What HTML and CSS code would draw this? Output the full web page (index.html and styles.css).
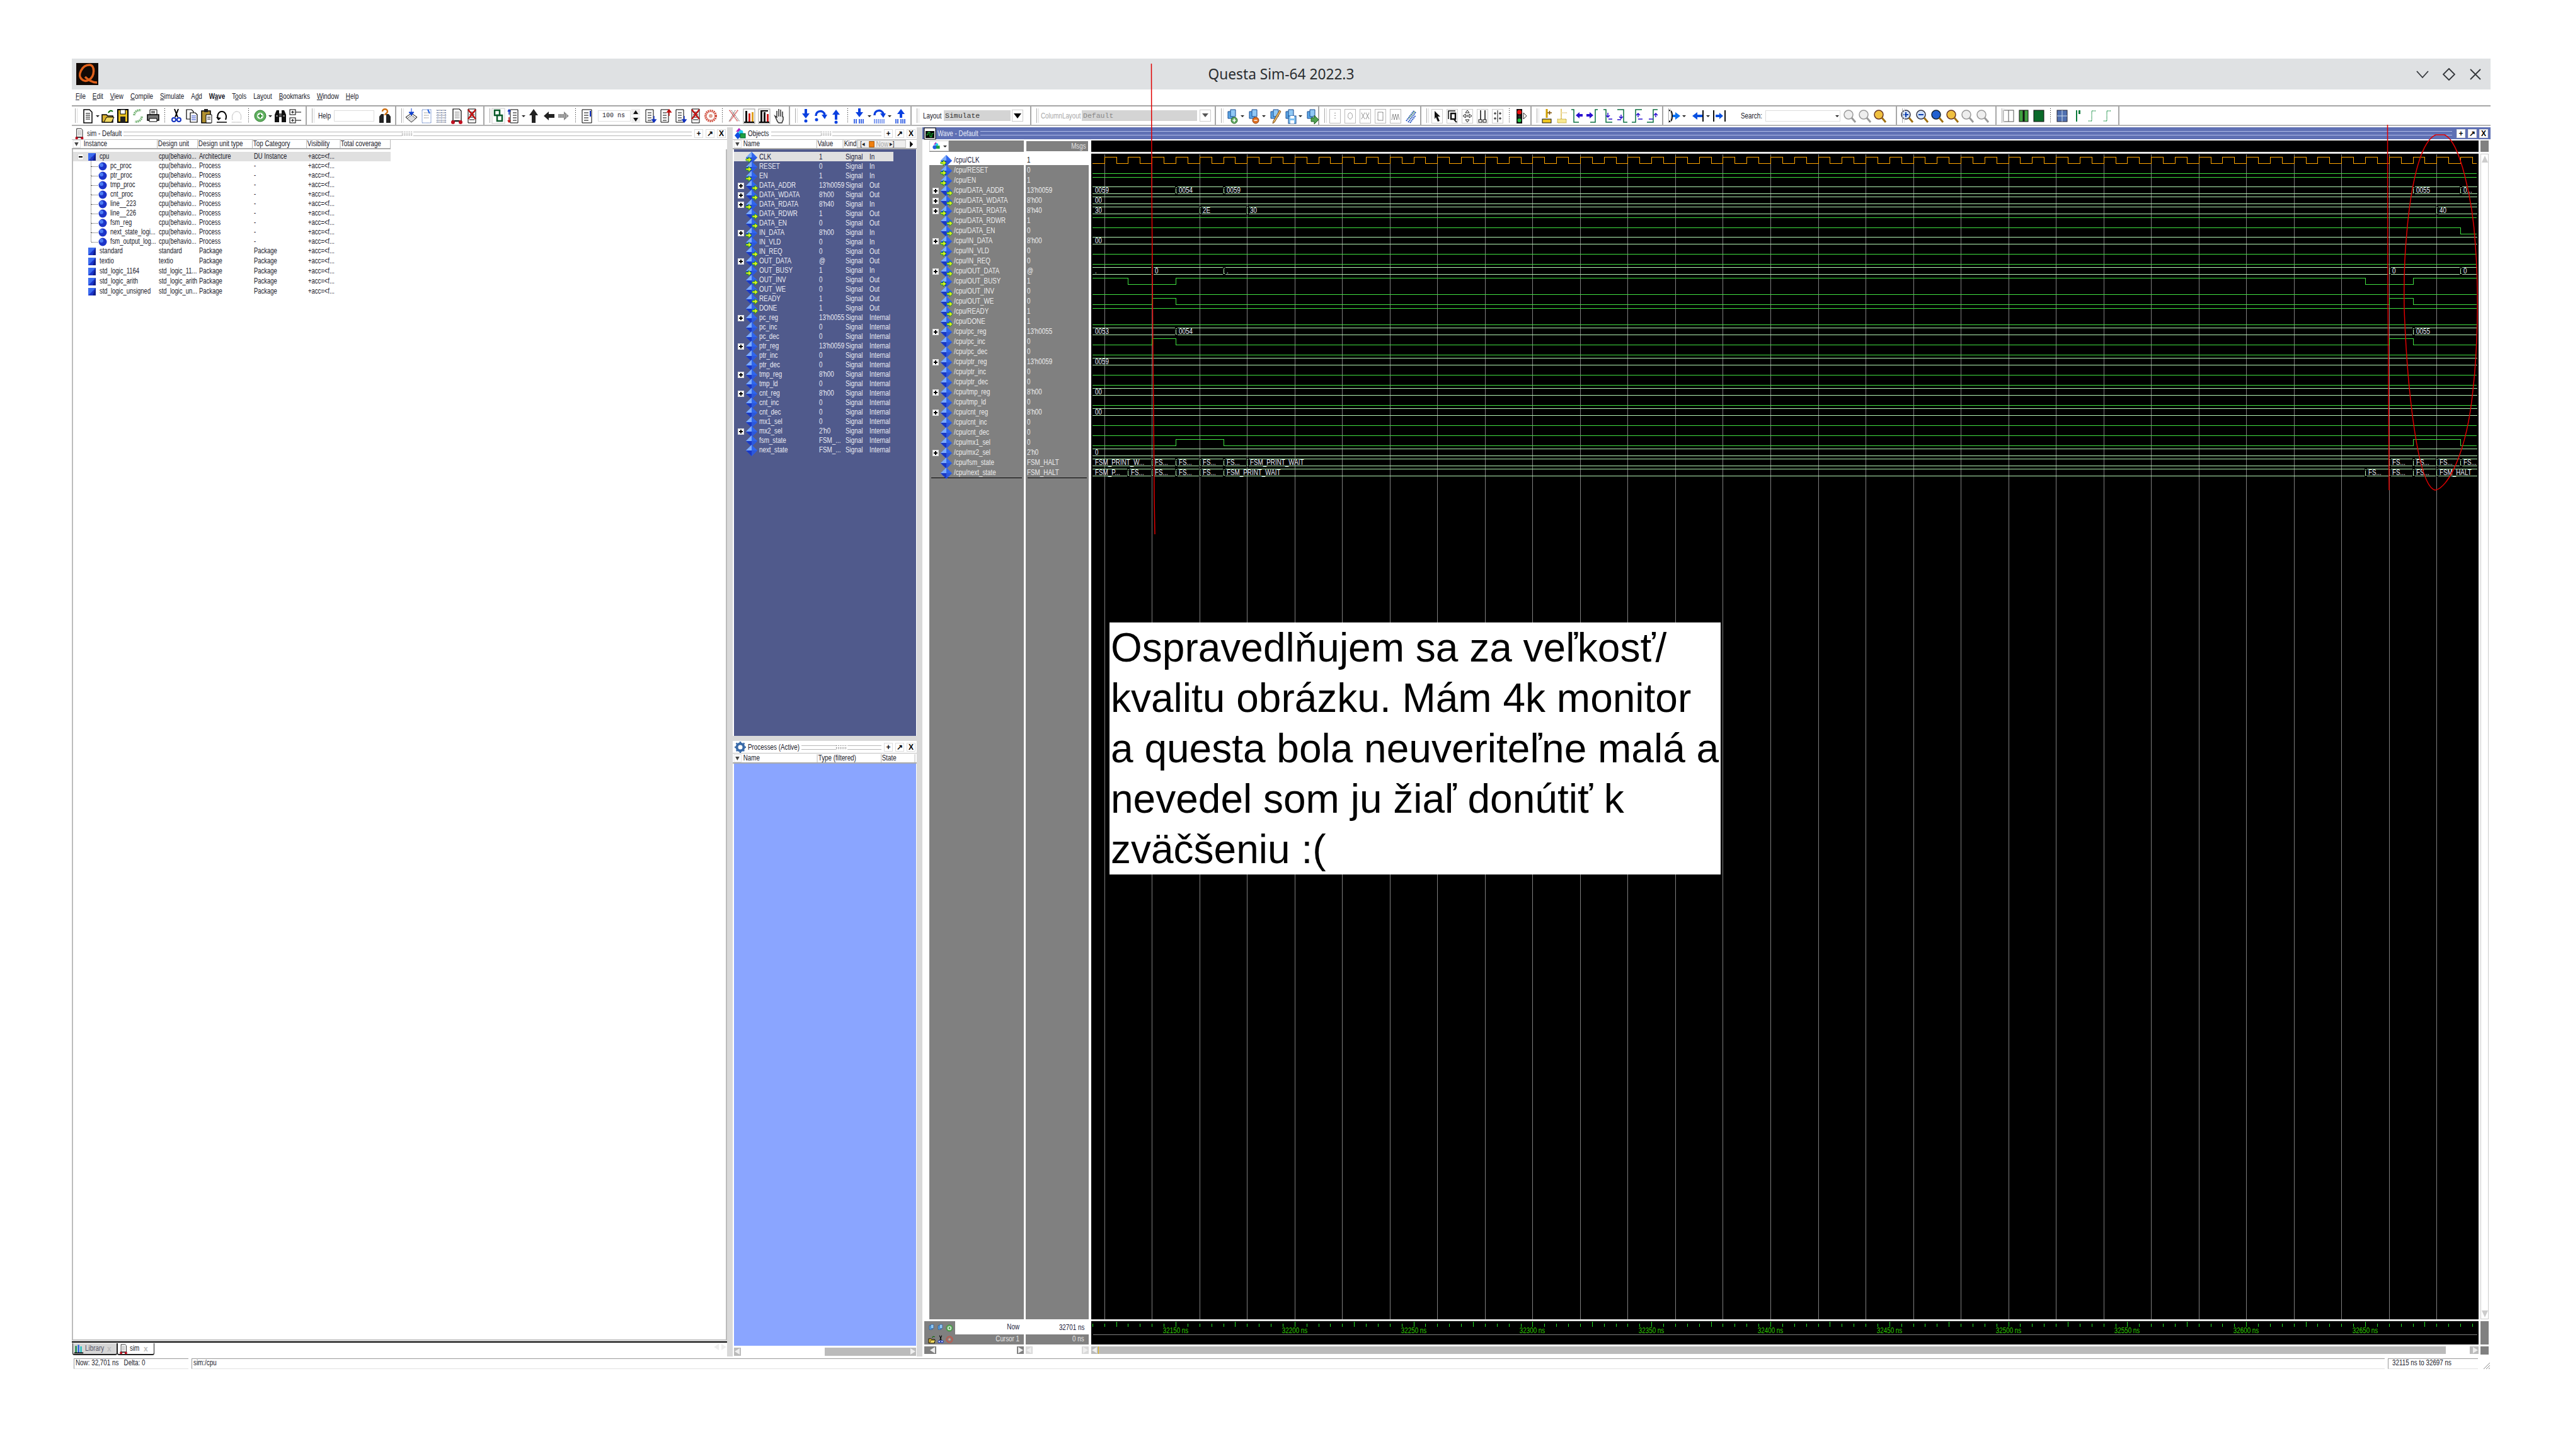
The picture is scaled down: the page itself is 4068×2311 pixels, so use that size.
FILE: index.html
```html
<!DOCTYPE html>
<html lang="en">
<head>
<meta charset="utf-8">
<title>Questa Sim-64 2022.3</title>
<link rel="stylesheet" href="styles.css">
</head>
<body>
<svg class="sprite" xmlns="http://www.w3.org/2000/svg">
<defs>
<symbol id="dia" viewBox="0 0 24 18"><path d="M12 0l9 9-9 9-9-9z" fill="#2f66ee"/><path d="M12 0v9H3z" fill="#7cabfa"/><path d="M3 9h9v9z" fill="#1a38c4"/><path d="M12 9h9l-9 9z" fill="#2c58dc"/></symbol>
<symbol id="sin" viewBox="0 0 24 18"><use href="#dia" width="24" height="18"/><path d="M4 11h4V8l5 4.500-5 4.500v-3H4z" fill="#d8f020" stroke="#0a8a20" stroke-width=".8" transform="translate(-1 0)"/></symbol>
<symbol id="sou" viewBox="0 0 24 18"><use href="#dia" width="24" height="18"/><path d="M13 11h4V8l5 4.500-5 4.500v-3h-4z" fill="#d8f020" stroke="#0a8a20" stroke-width=".8"/></symbol>
<symbol id="mod" viewBox="0 0 14 14"><rect x="1" y="1" width="12" height="12" fill="#1c34c8"/><path d="M1 1h12L1 13z" fill="#3c6cf0"/><path d="M13 1v12H8z" fill="#12208c"/></symbol>
<symbol id="prc" viewBox="0 0 14 14"><circle cx="7" cy="7" r="6.500" fill="#1c34c8"/><circle cx="5" cy="5" r="3" fill="#4c7cf4"/></symbol>
<symbol id="doc" viewBox="0 0 24 28"><path d="M6 4h9l4 4v17H6z" fill="#fff" stroke="#000" stroke-width="1.500"/><path d="M9 10h7M9 13h7M9 16h7M9 19h7" stroke="#000"/></symbol>
<symbol id="open" viewBox="0 0 24 28"><path d="M3 24V12h7l2 2h8v10z" fill="#d8b030" stroke="#000" stroke-width="1.500"/><path d="M6 24l4-8h12l-4 8z" fill="#f0d860" stroke="#000"/><path d="M13 9c2-4 5-4 7-2" fill="none" stroke="#060" stroke-width="2"/></symbol>
<symbol id="save" viewBox="0 0 24 28"><rect x="4" y="4" width="16" height="20" fill="#e8c020" stroke="#000" stroke-width="2"/><rect x="8" y="4" width="8" height="7" fill="#fff" stroke="#000"/><rect x="8" y="15" width="8" height="9" fill="#222"/></symbol>
<symbol id="reload" viewBox="0 0 24 28"><path d="M6 13c0-5 5-9 11-8M18 15c0 5-5 9-11 8" fill="none" stroke="#70b070" stroke-width="3.500" stroke-dasharray="2 1"/></symbol>
<symbol id="print" viewBox="0 0 24 28"><path d="M7 4h11v8H7z" fill="#fff" stroke="#000"/><path d="M3 12h18v9H3z" fill="#777" stroke="#000" stroke-width="1.500"/><path d="M6 18h12v5H6z" fill="#fff" stroke="#000"/><path d="M9 7h6M9 9h6" stroke="#000"/></symbol>
<symbol id="cut" viewBox="0 0 24 28"><path d="M9 3l5 13M15 3l-5 13" stroke="#000" stroke-width="2"/><circle cx="8" cy="20" r="3" fill="#fff" stroke="#1030c0" stroke-width="2"/><circle cx="16" cy="20" r="3" fill="#fff" stroke="#1030c0" stroke-width="2"/></symbol>
<symbol id="copy" viewBox="0 0 24 28"><path d="M4 4h8l3 3v12H4z" fill="#fff" stroke="#000" stroke-width="1.200"/><path d="M10 9h8l3 3v12H10z" fill="#fff" stroke="#000" stroke-width="1.200"/><path d="M12 14h7M12 17h7M12 20h7" stroke="#1030c0"/></symbol>
<symbol id="paste" viewBox="0 0 24 28"><rect x="4" y="6" width="14" height="19" fill="#b09030" stroke="#000" stroke-width="1.500"/><rect x="8" y="3" width="6" height="5" fill="#222"/><path d="M11 12h9v13h-9z" fill="#fff" stroke="#000"/><path d="M13 16h5M13 19h5" stroke="#000"/></symbol>
<symbol id="undo" viewBox="0 0 24 28"><path d="M7 20c-4-6 0-13 5-13s9 6 6 13" fill="none" stroke="#000" stroke-width="2"/><path d="M3 16l4 5 4-4z" fill="#000"/><path d="M4 24h16" stroke="#000" stroke-width="1.500"/></symbol>
<symbol id="redo" viewBox="0 0 24 28"><path d="M5 20c-2-7 2-13 7-13s8 6 6 13" fill="none" stroke="#888" stroke-dasharray="1 1"/><path d="M4 24h16" stroke="#888" stroke-dasharray="1 1"/></symbol>
<symbol id="add" viewBox="0 0 24 28"><circle cx="12" cy="14" r="9" fill="#60b060" stroke="#2a7a2a"/><circle cx="12" cy="14" r="5" fill="#fff"/><path d="M12 10.500v7M8.500 14h7" stroke="#2a8a2a" stroke-width="2"/></symbol>
<symbol id="binoc" viewBox="0 0 24 28"><path d="M3 24V12l3-7h4v19zM21 24V12l-3-7h-4v19z" fill="#111"/><path d="M10 10h4v6h-4z" fill="#555"/><path d="M5 14h3M16 14h3" stroke="#fff"/></symbol>
<symbol id="cmp" viewBox="0 0 24 28"><rect x="3" y="4" width="9" height="8" fill="#fff" stroke="#000"/><rect x="3" y="17" width="9" height="8" fill="#fff" stroke="#000"/><path d="M12 8h9M12 21h9M5 8h5M5 21h5M7.500 6v4M7.500 19v4" stroke="#000"/></symbol>
<symbol id="qfind" viewBox="0 0 24 28"><path d="M3 25V15l3-4h4v14zM21 25V15l-3-4h-4v14z" fill="#222"/><path d="M8 7c0-5 8-5 8 0 0 3-4 3-4 6" fill="none" stroke="#d07010" stroke-width="2.500"/></symbol>
<symbol id="layers" viewBox="0 0 24 28"><path d="M12 10l9 6-9 8-9-8z" fill="#fff" stroke="#000"/><path d="M12 13l7 5-7 6-7-6z" fill="#ddd" stroke="#000" stroke-dasharray="1 1"/><path d="M12 2v8M8 8h8l-4 5z" fill="#1040d0" stroke="#1040d0"/></symbol>
<symbol id="dotdoc" viewBox="0 0 24 28"><path d="M5 4h14v21H5z" fill="#fff" stroke="#2050b0" stroke-dasharray="1 1"/><path d="M8 9h8M8 13h8M8 17h8" stroke="#555" stroke-dasharray="1 1"/><path d="M14 4l3 6" stroke="#2060e0" stroke-width="2"/></symbol>
<symbol id="dotgrid" viewBox="0 0 24 28"><path d="M4 5h16M4 9h16M4 13h16M4 17h16M4 21h16M4 24h16" stroke="#223" stroke-dasharray="1 1" stroke-width="1.200"/><path d="M6 5v19M12 5v19M18 5v19" stroke="#2050b0" stroke-dasharray="1 2"/></symbol>
<symbol id="simdoc" viewBox="0 0 24 28"><path d="M6 3h10l3 3v16H6z" fill="#fff" stroke="#000" stroke-width="1.200"/><path d="M9 8h7M9 11h7M9 14h7M9 17h7" stroke="#000" stroke-dasharray="1 1"/><path d="M4 22h16" stroke="#000" stroke-width="2"/><circle cx="6" cy="24" r="3" fill="#c01020"/><circle cx="18" cy="24" r="3" fill="#c01020"/></symbol>
<symbol id="xdoc" viewBox="0 0 24 28"><path d="M6 3h12v22H6z" fill="#fff" stroke="#000"/><path d="M8 8h8M8 12h8M8 16h8M8 20h8" stroke="#000"/><path d="M6 4l12 15M18 4L6 19" stroke="#c01010" stroke-width="2.500"/></symbol>
<symbol id="chip" viewBox="0 0 24 28"><rect x="2" y="2" width="20" height="24" fill="#fff" stroke="#ccc"/><rect x="6" y="5" width="8" height="8" fill="none" stroke="#0a5a2a" stroke-width="2.500"/><rect x="10" y="13" width="8" height="9" fill="none" stroke="#0a5a2a" stroke-width="2.500"/></symbol>
<symbol id="listarr" viewBox="0 0 24 28"><path d="M7 4h12v21H7z" fill="#fff" stroke="#000"/><path d="M11 9h6M11 13h6M11 17h6M11 21h6" stroke="#000"/><path d="M5 12V5M3 7l2-3 2 3" fill="none" stroke="#1030c0" stroke-width="1.500"/><path d="M5 16v8M3 21l2 3 2-3" fill="none" stroke="#c01010" stroke-width="1.500"/></symbol>
<symbol id="upbig" viewBox="0 0 24 28"><path d="M12 3l7 10h-4v12H9V13H5z" fill="#222"/></symbol>
<symbol id="leftbig" viewBox="0 0 24 28"><path d="M4 14l8-7v4h9v6h-9v4z" fill="#222"/></symbol>
<symbol id="rightg" viewBox="0 0 24 28"><path d="M20 14l-8-7v4H3v6h9v4z" fill="#888"/><path d="M4 12h14M4 14h16M4 16h14" stroke="#fff" stroke-dasharray="1 2"/></symbol>
<symbol id="docarr" viewBox="0 0 24 28"><path d="M4 4h15v21H4z" fill="#fff" stroke="#000"/><path d="M7 9h7M7 13h7M7 17h7M7 21h7" stroke="#000"/><path d="M17 6v9" stroke="#1030c0" stroke-width="2"/></symbol>
<symbol id="docdn" viewBox="0 0 24 28"><path d="M5 4h12v20H5z" fill="#fff" stroke="#000"/><path d="M8 9h6M8 13h6M8 17h6M8 21h6" stroke="#000"/><path d="M18 14v9M15 20l3 4 3-4z" stroke="#1030c0" fill="#1030c0" stroke-width="1.500"/></symbol>
<symbol id="docup" viewBox="0 0 24 28"><path d="M5 4h12v20H5z" fill="#fff" stroke="#000"/><path d="M8 9h6M8 13h6M8 17h6M8 21h6" stroke="#000"/><path d="M18 14V5M15 8l3-4 3 4z" stroke="#c01010" fill="#c01010" stroke-width="1.500"/></symbol>
<symbol id="redc" viewBox="0 0 24 28"><circle cx="12" cy="14" r="8" fill="none" stroke="#d05040" stroke-width="4" stroke-dasharray="2 1"/><circle cx="12" cy="14" r="3" fill="#e0a090"/></symbol>
<symbol id="dotx" viewBox="0 0 24 28"><path d="M5 5l13 18M18 5L5 23" stroke="#c02020" stroke-width="2" stroke-dasharray="1 1"/><path d="M8 5l13 18M14 5L4 23" stroke="#222" stroke-dasharray="1 1"/></symbol>
<symbol id="chartp" viewBox="0 0 24 28"><rect x="3" y="3" width="18" height="23" fill="#fff" stroke="#999"/><path d="M4 24h16" stroke="#000" stroke-width="2"/><rect x="6" y="6" width="3" height="17" fill="#111"/><rect x="11" y="10" width="3" height="13" fill="#d02020"/><rect x="16" y="8" width="3" height="15" fill="#e0a020"/></symbol>
<symbol id="chartm" viewBox="0 0 24 28"><rect x="3" y="3" width="18" height="23" fill="#fff" stroke="#999"/><path d="M4 24h16M6 6h12" stroke="#000" stroke-width="2"/><rect x="6" y="6" width="3" height="17" fill="#111"/><rect x="11" y="8" width="3" height="15" fill="#111"/><rect x="16" y="11" width="3" height="12" fill="#d02020"/></symbol>
<symbol id="hand" viewBox="0 0 24 28"><path d="M8 17V6M11 15V3M14 15V4M17 16V7M8 16l-3-2 4 9 2 2h5l2-5v-5" fill="#eee" stroke="#333" stroke-width="1.500"/></symbol>
<symbol id="bdn" viewBox="0 0 24 28"><path d="M10 3h4v7h4l-6 8-6-8h4z" fill="#0a40e0"/><circle cx="12" cy="22" r="2.500" fill="#0a40e0"/></symbol>
<symbol id="bup" viewBox="0 0 24 28"><path d="M10 20h4v-8h4l-6-8-6 8h4z" fill="#0a40e0"/><circle cx="12" cy="24" r="2.500" fill="#0a40e0"/></symbol>
<symbol id="bcv" viewBox="0 0 24 28"><path d="M4 14c0-9 12-10 14-2" fill="none" stroke="#0a40e0" stroke-width="3.500"/><path d="M13 12h9l-4 7z" fill="#0a40e0"/><circle cx="5" cy="20" r="2.500" fill="#0a40e0"/></symbol>
<symbol id="bdnb" viewBox="0 0 24 28"><path d="M10 2h4v6h4l-6 8-6-8h4z" fill="#0a40e0"/><path d="M4 19v7M7 19v7M12 19v7M15 19v7M18 19v7" stroke="#0a40e0" stroke-width="1.500"/></symbol>
<symbol id="bupb" viewBox="0 0 24 28"><path d="M10 17h4v-6h4l-6-8-6 8h4z" fill="#0a40e0"/><path d="M4 19v7M7 19v7M12 19v7M15 19v7M18 19v7" stroke="#0a40e0" stroke-width="1.500"/></symbol>
<symbol id="bcvb" viewBox="0 0 24 28"><path d="M4 13c0-9 12-10 14-2" fill="none" stroke="#0a40e0" stroke-width="3.500"/><path d="M13 10h9l-4 7z" fill="#0a40e0"/><path d="M4 19v7M7 19v7M10 19v7M13 19v7M16 19v7M19 19v7" stroke="#0a40e0"/></symbol>
<symbol id="tile" viewBox="0 0 24 28"><path d="M5 7h8v11H5z" fill="#5ca8e8" stroke="#164a90"/><path d="M9 4h8v11H9z" fill="#90c8f4" stroke="#164a90"/></symbol>
<symbol id="tadd" viewBox="0 0 24 28"><use href="#tile" width="24" height="28"/><circle cx="15" cy="21" r="5" fill="#60a860" stroke="#2a6a2a"/><path d="M15 18v6M12.500 21h5" stroke="#fff" stroke-width="1.500"/></symbol>
<symbol id="trem" viewBox="0 0 24 28"><use href="#tile" width="24" height="28"/><circle cx="15" cy="21" r="5" fill="#e07020" stroke="#904010"/><path d="M12.500 21h5" stroke="#fff" stroke-width="1.500"/></symbol>
<symbol id="tpen" viewBox="0 0 24 28"><use href="#tile" width="24" height="28"/><path d="M21 7L11 24l-3 2 1-4L19 5z" fill="#e8b860" stroke="#805020"/></symbol>
<symbol id="tsav" viewBox="0 0 24 28"><use href="#tile" width="24" height="28"/><rect x="9" y="14" width="12" height="12" fill="#80c0f0" stroke="#164a90"/><rect x="12" y="14" width="6" height="4" fill="#fff"/><rect x="12" y="21" width="6" height="5" fill="#fff"/></symbol>
<symbol id="tarr" viewBox="0 0 24 28"><use href="#tile" width="24" height="28"/><path d="M11 17h5v-4l7 7-7 7v-4h-5z" fill="#50a050" stroke="#206020"/></symbol>
<symbol id="bx1" viewBox="0 0 24 28"><rect x="3.500" y="3.500" width="17" height="22" fill="#fff" stroke="#bbb"/><path d="M12 9v11" stroke="#333" stroke-dasharray="1 3"/></symbol>
<symbol id="bx2" viewBox="0 0 24 28"><rect x="3.500" y="3.500" width="17" height="22" fill="#fff" stroke="#bbb"/><ellipse cx="12" cy="14" rx="3.500" ry="5" fill="none" stroke="#333" stroke-dasharray="1 1"/></symbol>
<symbol id="bx3" viewBox="0 0 24 28"><rect x="3.500" y="3.500" width="17" height="22" fill="#fff" stroke="#bbb"/><path d="M6 9l5 10M11 9L6 19M13 19l5-10M13 9l5 10" stroke="#333" stroke-dasharray="1 1"/></symbol>
<symbol id="bx4" viewBox="0 0 24 28"><rect x="3.500" y="3.500" width="17" height="22" fill="#fff" stroke="#bbb"/><rect x="8" y="8" width="8" height="13" fill="none" stroke="#222" stroke-dasharray="1 1"/></symbol>
<symbol id="bx5" viewBox="0 0 24 28"><rect x="3.500" y="3.500" width="17" height="22" fill="#fff" stroke="#bbb"/><path d="M6 20l2-9 2 9M10 20l2-9 2 9M14 20l2-9 2 9" fill="none" stroke="#333" stroke-dasharray="1 1"/></symbol>
<symbol id="bx6" viewBox="0 0 24 28"><path d="M5 22L17 6M8 24L20 8M11 25l9-12" stroke="#2050c0" stroke-width="2" stroke-dasharray="2 1"/><path d="M9 18L19 6" stroke="#60a060" stroke-width="2" stroke-dasharray="1 1"/></symbol>
<symbol id="cur" viewBox="0 0 24 28"><rect x="3.500" y="3.500" width="17" height="22" fill="#fff" stroke="#ccc"/><path d="M8 6l9 9h-4l3 7-3 1-3-7-2 3z" fill="#111"/></symbol>
<symbol id="zbox" viewBox="0 0 24 28"><rect x="3.500" y="3.500" width="17" height="22" fill="#fff" stroke="#ccc"/><path d="M6 19V6h11" fill="none" stroke="#111" stroke-width="1.500"/><rect x="10" y="10" width="7" height="9" fill="none" stroke="#111" stroke-width="2.500"/><path d="M15 20l4 4" stroke="#111" stroke-width="2"/></symbol>
<symbol id="movei" viewBox="0 0 24 28"><rect x="3.500" y="3.500" width="17" height="22" fill="#fff" stroke="#ccc"/><path d="M12 5l3 4H9zM12 24l3-4H9zM5 14l4-3v6zM19 14l-4-3v6z" fill="#fff" stroke="#222"/><circle cx="12" cy="14" r="2" fill="#888"/></symbol>
<symbol id="linesi" viewBox="0 0 24 28"><rect x="3.500" y="3.500" width="17" height="22" fill="#fff" stroke="#ccc"/><path d="M9 5v15M16 5v15" stroke="#111" stroke-width="1.500"/><rect x="6" y="20" width="5" height="4" fill="none" stroke="#111"/><rect x="13" y="20" width="5" height="4" fill="none" stroke="#111"/></symbol>
<symbol id="insi" viewBox="0 0 24 28"><rect x="3.500" y="3.500" width="17" height="22" fill="#fff" stroke="#ccc"/><path d="M12 5v19" stroke="#111"/><path d="M6 10h4M8 8v4M6 18h4M8 16v4M14 10h4M16 8v4M14 18h4M16 16v4" stroke="#111"/></symbol>
<symbol id="traffic" viewBox="0 0 24 28"><rect x="5" y="3" width="9" height="23" fill="#111"/><circle cx="9.500" cy="8" r="3.500" fill="#e81010"/><circle cx="9.500" cy="15" r="2" fill="#333"/><circle cx="9.500" cy="21" r="3" fill="#20c040"/><path d="M16 9l5 5-5 5z" fill="#fff" stroke="#333"/></symbol>
<symbol id="key1" viewBox="0 0 24 28"><path d="M12 3v14" stroke="#d0a000" stroke-width="3"/><path d="M13 9h7M16.500 6v6" stroke="#805000" stroke-width="1.500"/><rect x="5" y="19" width="14" height="6" fill="#f0c820" stroke="#111"/></symbol>
<symbol id="key2" viewBox="0 0 24 28"><path d="M11 3v15" stroke="#d0a000" stroke-dasharray="1 1" stroke-width="2"/><path d="M13 9h7" stroke="#c09000" stroke-dasharray="1 1"/><rect x="5" y="19" width="14" height="6" fill="#f8e890" stroke="#a08000" stroke-dasharray="1 1"/></symbol>
<symbol id="stl" viewBox="0 0 24 28"><path d="M3 4h4v20h8" fill="none" stroke="#0a7040" stroke-width="1.500"/><path d="M10 13l6-5v3h5v4h-5v3z" fill="#2a10d0"/></symbol>
<symbol id="str" viewBox="0 0 24 28"><path d="M21 4h-4v20H9" fill="none" stroke="#0a7040" stroke-width="1.500"/><path d="M14 13L8 8v3H3v4h5v3z" fill="#2a10d0"/></symbol>
<symbol id="stdl" viewBox="0 0 24 28"><path d="M6 4h4v20h10" fill="none" stroke="#0a7040" stroke-width="1.500"/><path d="M13 9v6M10 13l3 3 3-3M14 19h6" stroke="#2a10d0" stroke-width="1.500" fill="none"/></symbol>
<symbol id="stdr" viewBox="0 0 24 28"><path d="M4 4h10v20h6" fill="none" stroke="#0a7040" stroke-width="1.500"/><path d="M10 12v6M7 15l3 3 3-3M4 20h6" stroke="#2a10d0" stroke-width="1.500" fill="none"/></symbol>
<symbol id="stul" viewBox="0 0 24 28"><path d="M3 24h6V4h10" fill="none" stroke="#0a7040" stroke-width="1.500"/><path d="M13 10v6M10 13l3-3 3 3M13 19h7" stroke="#2a10d0" stroke-width="1.500" fill="none"/></symbol>
<symbol id="stur" viewBox="0 0 24 28"><path d="M3 24h10V4h7" fill="none" stroke="#0a7040" stroke-width="1.500"/><path d="M17 10v6M14 13l3-3 3 3M6 19h7" stroke="#2a10d0" stroke-width="1.500" fill="none"/></symbol>
<symbol id="sch1" viewBox="0 0 24 28"><path d="M3 5c6 0 6 5 6 9s0 9-6 9" fill="none" stroke="#111" stroke-width="2"/><path d="M22 14l-8-6v4H10v4h4v4z" fill="#0a70f0"/></symbol>
<symbol id="sch2" viewBox="0 0 24 28"><path d="M3 14l8-6v4h10v4H11v4z" fill="#0a50e0"/><path d="M20 5v18" stroke="#111" stroke-width="2"/></symbol>
<symbol id="sch4" viewBox="0 0 24 28"><path d="M3 5v18M21 5v18" stroke="#111" stroke-width="2"/><path d="M18 14l-6-5v3H6v4h6v3z" fill="#0a50e0"/></symbol>
<symbol id="mag" viewBox="0 0 24 28"><circle cx="10" cy="12" r="7" fill="#cfe0f8" stroke="#334" stroke-width="1.500"/><path d="M15 17l6 7" stroke="#a07010" stroke-width="3"/></symbol>
<symbol id="magg" viewBox="0 0 24 28"><circle cx="10" cy="12" r="7" fill="#eee" stroke="#999" stroke-width="1.500"/><path d="M15 17l6 7" stroke="#999" stroke-width="3"/></symbol>
<symbol id="magp" viewBox="0 0 24 28"><use href="#mag" width="24" height="28"/><path d="M6 12h8M10 8v8" stroke="#1040b0" stroke-width="2"/></symbol>
<symbol id="magm" viewBox="0 0 24 28"><use href="#mag" width="24" height="28"/><path d="M6 12h8" stroke="#1040b0" stroke-width="2"/></symbol>
<symbol id="magf" viewBox="0 0 24 28"><circle cx="10" cy="12" r="7" fill="#2060d0" stroke="#123" stroke-width="1.500"/><path d="M15 17l6 7" stroke="#a07010" stroke-width="3"/></symbol>
<symbol id="magy" viewBox="0 0 24 28"><circle cx="10" cy="12" r="7" fill="#f0c040" stroke="#632" stroke-width="1.500"/><path d="M15 17l6 7" stroke="#a07010" stroke-width="3"/></symbol>
<symbol id="wv1" viewBox="0 0 24 28"><rect x="4" y="5" width="16" height="18" fill="#fff" stroke="#555"/><path d="M12 5v18" stroke="#555"/></symbol>
<symbol id="wv2" viewBox="0 0 24 28"><rect x="5" y="5" width="14" height="18" fill="#40a040" stroke="#111"/><path d="M12 5v18" stroke="#111" stroke-width="3"/></symbol>
<symbol id="wv3" viewBox="0 0 24 28"><rect x="4" y="5" width="16" height="18" fill="#0a6a2a" stroke="#111"/></symbol>
<symbol id="wv4" viewBox="0 0 24 28"><rect x="4" y="5" width="16" height="18" fill="#5070b0" stroke="#223"/><path d="M4 14h16M12 5v18" stroke="#cde"/></symbol>
<symbol id="wv5" viewBox="0 0 24 28"><path d="M11 5v18" stroke="#0a7a3a" stroke-width="2"/><path d="M14 5h3v6h-3z" fill="#0a7a3a"/></symbol>
<symbol id="wv6" viewBox="0 0 24 28"><path d="M6 22h5V6h6" fill="none" stroke="#0a8a3a" stroke-dasharray="1 1" stroke-width="1.500"/></symbol>
<symbol id="objs" viewBox="0 0 20 20"><path d="M8 1l5 6H3z" fill="#b020c0"/><path d="M6 7l6 6-6 6-5-6z" fill="#1050e0"/><circle cx="11" cy="8" r="3.500" fill="#20d0f0"/><rect x="10" y="10" width="8" height="7" fill="#20a040" stroke="#063"/></symbol>
<symbol id="wavi" viewBox="0 0 20 20"><rect x="1" y="1" width="18" height="18" fill="#fff" stroke="#000"/><rect x="3" y="6" width="14" height="11" fill="#000"/><path d="M4 12h3v-4h3v7h3v-5h3" fill="none" stroke="#20e040"/></symbol>
<symbol id="gear" viewBox="0 0 20 20"><circle cx="10" cy="10" r="5.500" fill="none" stroke="#3a6aa8" stroke-width="4"/><path d="M10 1v18M1 10h18M3.500 3.500l13 13M16.500 3.500l-13 13" stroke="#3a6aa8" stroke-width="2.500" stroke-dasharray="3 12 3"/></symbol>
<symbol id="libi" viewBox="0 0 20 20"><path d="M3 4h3v14H3z" fill="#108a40"/><path d="M8 2h3v16H8z" fill="#2060e0"/><path d="M13 5h3v13h-3z" fill="#20c0c0"/><path d="M1 18h18" stroke="#000" stroke-width="2"/></symbol>
<symbol id="lay" viewBox="0 0 20 20"><path d="M5 7l4-5 4 5z" fill="#b020c0"/><circle cx="11" cy="7" r="3" fill="#20d0f0"/><circle cx="7" cy="12" r="4" fill="#2060e0"/><rect x="10" y="9" width="7" height="6" fill="#20a040"/></symbol>
</defs>
</svg>

<div class="window">
  <header class="titlebar">
    <svg class="logo" viewBox="0 0 35 35"><rect width="35" height="35" fill="#120a06"/><path d="M9 26C1 20 9 3 21 3c9 0 9 18-1 24-4 2-8 2-11-1z" fill="none" stroke="#e0601a" stroke-width="3.500"/><path d="M14 22c5 5 11 9 19 9" fill="none" stroke="#e0601a" stroke-width="3.500"/></svg>
    <div class="wintitle">Questa Sim-64 2022.3</div>
    <div class="winctl">
      <svg viewBox="0 0 20 20"><path d="M1 5l9 10 9-10" /></svg>
      <svg viewBox="0 0 20 20"><path d="M10 1l9 9-9 9-9-9z"/></svg>
      <svg viewBox="0 0 20 20"><path d="M2 2l16 16M18 2L2 18"/></svg>
    </div>
  </header>
  <nav class="menubar">
    <span><u>F</u>ile</span><span><u>E</u>dit</span><span><u>V</u>iew</span><span><u>C</u>ompile</span><span><u>S</u>imulate</span><span>A<u>d</u>d</span><span class="on">W<u>a</u>ve</span><span>T<u>o</u>ols</span><span>La<u>y</u>out</span><span><u>B</u>ookmarks</span><span><u>W</u>indow</span><span><u>H</u>elp</span>
  </nav>
  <div class="toolbar">
    <div class="tg g1"><svg class="ic"><use href="#doc"/></svg><i class="ct"></i><svg class="ic"><use href="#open"/></svg><svg class="ic"><use href="#save"/></svg><svg class="ic"><use href="#reload"/></svg><svg class="ic"><use href="#print"/></svg><i class="sp"></i><svg class="ic"><use href="#cut"/></svg><svg class="ic"><use href="#copy"/></svg><svg class="ic"><use href="#paste"/></svg><svg class="ic"><use href="#undo"/></svg><svg class="ic"><use href="#redo"/></svg><i class="sp"></i><svg class="ic"><use href="#add"/></svg><i class="ct"></i><svg class="ic"><use href="#binoc"/></svg><svg class="ic"><use href="#cmp"/></svg></div>
    <div class="tg g2"><span class="tl">Help</span><span class="inp help-in"></span><svg class="ic"><use href="#qfind"/></svg></div>
    <div class="tg g3"><svg class="ic"><use href="#layers"/></svg><svg class="ic"><use href="#dotdoc"/></svg><svg class="ic"><use href="#dotgrid"/></svg><svg class="ic"><use href="#simdoc"/></svg><svg class="ic"><use href="#xdoc"/></svg></div>
    <div class="tg g4"><svg class="ic"><use href="#chip"/></svg><svg class="ic"><use href="#listarr"/></svg><i class="ct"></i><svg class="ic"><use href="#upbig"/></svg><svg class="ic"><use href="#leftbig"/></svg><svg class="ic"><use href="#rightg"/></svg><i class="sp"></i><svg class="ic"><use href="#docarr"/></svg><span class="inp run-in">100 ns</span><span class="spin"><i></i><i></i></span><svg class="ic"><use href="#docdn"/></svg><svg class="ic"><use href="#docup"/></svg><svg class="ic"><use href="#docdn"/></svg><svg class="ic"><use href="#xdoc"/></svg><svg class="ic"><use href="#redc"/></svg><i class="sp"></i><svg class="ic"><use href="#dotx"/></svg><svg class="ic"><use href="#chartp"/></svg><svg class="ic"><use href="#chartm"/></svg><svg class="ic"><use href="#hand"/></svg></div>
    <div class="tg g5"><svg class="ic"><use href="#bdn"/></svg><svg class="ic"><use href="#bcv"/></svg><svg class="ic"><use href="#bup"/></svg><i class="sp"></i><svg class="ic"><use href="#bdnb"/></svg><i class="ct"></i><svg class="ic"><use href="#bcvb"/></svg><i class="ct"></i><svg class="ic ml2"><use href="#bupb"/></svg></div>
    <div class="tg g6"><span class="tl">Layout</span><span class="combo lay-c">Simulate</span><span class="cbtn"><i></i></span></div>
    <div class="tg g7"><span class="tl dim">ColumnLayout</span><span class="combo col-c dimc">Default</span><span class="cbtn thin"><i></i></span></div>
    <div class="tg g8"><svg class="ic"><use href="#tadd"/></svg><i class="ct w10"></i><svg class="ic"><use href="#trem"/></svg><i class="ct w10"></i><svg class="ic"><use href="#tpen"/></svg><svg class="ic"><use href="#tsav"/></svg><i class="ct w10"></i><svg class="ic"><use href="#tarr"/></svg></div>
    <div class="tg g9"><svg class="ic"><use href="#bx1"/></svg><svg class="ic"><use href="#bx2"/></svg><svg class="ic"><use href="#bx3"/></svg><svg class="ic"><use href="#bx4"/></svg><svg class="ic"><use href="#bx5"/></svg><svg class="ic"><use href="#bx6"/></svg></div>
    <div class="tg g10"><svg class="ic"><use href="#cur"/></svg><svg class="ic"><use href="#zbox"/></svg><svg class="ic"><use href="#movei"/></svg><svg class="ic"><use href="#linesi"/></svg><svg class="ic"><use href="#insi"/></svg><i class="sp"></i><svg class="ic"><use href="#traffic"/></svg></div>
    <div class="tg g11"><svg class="ic"><use href="#key1"/></svg><svg class="ic"><use href="#key2"/></svg><svg class="ic"><use href="#stl"/></svg><svg class="ic"><use href="#str"/></svg><svg class="ic"><use href="#stdl"/></svg><svg class="ic"><use href="#stdr"/></svg><svg class="ic"><use href="#stul"/></svg><svg class="ic"><use href="#stur"/></svg></div>
    <div class="tg g12"><svg class="ic"><use href="#sch1"/></svg><i class="ct w12"></i><svg class="ic ml2"><use href="#sch2"/></svg><i class="ct w10"></i><svg class="ic"><use href="#sch4"/></svg><span class="tl srch">Search:</span><span class="inp srch-in"><i class="ct"></i></span><svg class="ic ml2"><use href="#magg"/></svg><svg class="ic"><use href="#magg"/></svg><svg class="ic"><use href="#magy"/></svg></div>
    <div class="tg g13"><svg class="ic"><use href="#magp"/></svg><svg class="ic"><use href="#magm"/></svg><svg class="ic"><use href="#magf"/></svg><svg class="ic"><use href="#magy"/></svg><svg class="ic"><use href="#magg"/></svg><svg class="ic"><use href="#magg"/></svg></div>
    <div class="tg g14"><svg class="ic"><use href="#wv1"/></svg><svg class="ic"><use href="#wv2"/></svg><svg class="ic"><use href="#wv3"/></svg><i class="sp"></i><svg class="ic"><use href="#wv4"/></svg><svg class="ic"><use href="#wv5"/></svg><svg class="ic"><use href="#wv6"/></svg><svg class="ic"><use href="#wv6"/></svg></div>
  </div>

  <main class="main">
    <section class="sim">
      <div class="ptitle"><svg class="pi"><use href="#simdoc"/></svg><span class="pt pt-sim">sim - Default</span><span class="gl"></span><span class="gd"></span><span class="gl"></span><span class="pb">+</span><span class="pb">&#8599;</span><span class="pb">X</span></div>
      <div class="simhead"><span class="fl"></span><span class="h1">Instance</span><span class="h2">Design unit</span><span class="h3">Design unit type</span><span class="h4">Top Category</span><span class="h5">Visibility</span><span class="h6">Total coverage</span></div>
      <div class="simbody">
        <div class="sr sel"><span class="tc top"><b class="x minus"></b><svg class="mi"><use href="#mod"/></svg><span class="n">cpu</span></span><span>cpu(behavio...</span><span>Architecture</span><span>DU Instance</span><span>+acc=&lt;f...</span></div>
        <div class="sr"><span class="tc pr"><svg class="mi"><use href="#prc"/></svg><span class="n">pc_proc</span></span><span>cpu(behavio...</span><span>Process</span><span>-</span><span>+acc=&lt;f...</span></div>
        <div class="sr"><span class="tc pr"><svg class="mi"><use href="#prc"/></svg><span class="n">ptr_proc</span></span><span>cpu(behavio...</span><span>Process</span><span>-</span><span>+acc=&lt;f...</span></div>
        <div class="sr"><span class="tc pr"><svg class="mi"><use href="#prc"/></svg><span class="n">tmp_proc</span></span><span>cpu(behavio...</span><span>Process</span><span>-</span><span>+acc=&lt;f...</span></div>
        <div class="sr"><span class="tc pr"><svg class="mi"><use href="#prc"/></svg><span class="n">cnt_proc</span></span><span>cpu(behavio...</span><span>Process</span><span>-</span><span>+acc=&lt;f...</span></div>
        <div class="sr"><span class="tc pr"><svg class="mi"><use href="#prc"/></svg><span class="n">line__223</span></span><span>cpu(behavio...</span><span>Process</span><span>-</span><span>+acc=&lt;f...</span></div>
        <div class="sr"><span class="tc pr"><svg class="mi"><use href="#prc"/></svg><span class="n">line__226</span></span><span>cpu(behavio...</span><span>Process</span><span>-</span><span>+acc=&lt;f...</span></div>
        <div class="sr"><span class="tc pr"><svg class="mi"><use href="#prc"/></svg><span class="n">fsm_reg</span></span><span>cpu(behavio...</span><span>Process</span><span>-</span><span>+acc=&lt;f...</span></div>
        <div class="sr"><span class="tc pr"><svg class="mi"><use href="#prc"/></svg><span class="n">next_state_logi...</span></span><span>cpu(behavio...</span><span>Process</span><span>-</span><span>+acc=&lt;f...</span></div>
        <div class="sr"><span class="tc pr last"><svg class="mi"><use href="#prc"/></svg><span class="n">fsm_output_log...</span></span><span>cpu(behavio...</span><span>Process</span><span>-</span><span>+acc=&lt;f...</span></div>
        <div class="sr pk"><span class="tc top"><svg class="mi"><use href="#mod"/></svg><span class="n">standard</span></span><span>standard</span><span>Package</span><span>Package</span><span>+acc=&lt;f...</span></div>
        <div class="sr pk"><span class="tc top"><svg class="mi"><use href="#mod"/></svg><span class="n">textio</span></span><span>textio</span><span>Package</span><span>Package</span><span>+acc=&lt;f...</span></div>
        <div class="sr pk"><span class="tc top"><svg class="mi"><use href="#mod"/></svg><span class="n">std_logic_1164</span></span><span>std_logic_11...</span><span>Package</span><span>Package</span><span>+acc=&lt;f...</span></div>
        <div class="sr pk"><span class="tc top"><svg class="mi"><use href="#mod"/></svg><span class="n">std_logic_arith</span></span><span>std_logic_arith</span><span>Package</span><span>Package</span><span>+acc=&lt;f...</span></div>
        <div class="sr pk"><span class="tc top"><svg class="mi"><use href="#mod"/></svg><span class="n">std_logic_unsigned</span></span><span>std_logic_un...</span><span>Package</span><span>Package</span><span>+acc=&lt;f...</span></div>
      </div>
      <div class="tabs">
        <span class="tab off"><svg class="pi"><use href="#libi"/></svg><span class="n tn1">Library</span><em>x</em></span>
        <span class="tab act"><svg class="pi"><use href="#simdoc"/></svg><span class="n tn2">sim</span><em>x</em></span>
        <span class="tabfill"></span><span class="ar-l"></span><span class="ar-r"></span>
      </div>
    </section>

    <div class="midcol">
      <section class="objs">
        <div class="ptitle"><svg class="pi"><use href="#objs"/></svg><span class="pt pt-obj">Objects</span><span class="gl"></span><span class="gd"></span><span class="gl"></span><span class="pb">+</span><span class="pb">&#8599;</span><span class="pb">X</span></div>
        <div class="objhead"><span class="fl"></span><span class="oh1">Name</span><span class="oh2">Value</span><span class="oh3">Kind</span><span class="nowbox"><i class="nb">[&#9666;</i><i class="sq"></i><i class="nw">Now</i><i class="nb">&#9656;]</i></span><i class="more"></i></div>
        <div class="objlist">
          <div class="or sel"><b></b><svg class="si"><use href="#sin"/></svg><span>CLK</span><span>1</span><span>Signal</span><span>In</span></div>
          <div class="or"><b></b><svg class="si"><use href="#sin"/></svg><span>RESET</span><span>0</span><span>Signal</span><span>In</span></div>
          <div class="or"><b></b><svg class="si"><use href="#sin"/></svg><span>EN</span><span>1</span><span>Signal</span><span>In</span></div>
          <div class="or"><b class="x"></b><svg class="si"><use href="#sou"/></svg><span>DATA_ADDR</span><span>13'h0059</span><span>Signal</span><span>Out</span></div>
          <div class="or"><b class="x"></b><svg class="si"><use href="#sou"/></svg><span>DATA_WDATA</span><span>8'h00</span><span>Signal</span><span>Out</span></div>
          <div class="or"><b class="x"></b><svg class="si"><use href="#sin"/></svg><span>DATA_RDATA</span><span>8'h40</span><span>Signal</span><span>In</span></div>
          <div class="or"><b></b><svg class="si"><use href="#sou"/></svg><span>DATA_RDWR</span><span>1</span><span>Signal</span><span>Out</span></div>
          <div class="or"><b></b><svg class="si"><use href="#sou"/></svg><span>DATA_EN</span><span>0</span><span>Signal</span><span>Out</span></div>
          <div class="or"><b class="x"></b><svg class="si"><use href="#sin"/></svg><span>IN_DATA</span><span>8'h00</span><span>Signal</span><span>In</span></div>
          <div class="or"><b></b><svg class="si"><use href="#sin"/></svg><span>IN_VLD</span><span>0</span><span>Signal</span><span>In</span></div>
          <div class="or"><b></b><svg class="si"><use href="#sou"/></svg><span>IN_REQ</span><span>0</span><span>Signal</span><span>Out</span></div>
          <div class="or"><b class="x"></b><svg class="si"><use href="#sou"/></svg><span>OUT_DATA</span><span>@</span><span>Signal</span><span>Out</span></div>
          <div class="or"><b></b><svg class="si"><use href="#sin"/></svg><span>OUT_BUSY</span><span>1</span><span>Signal</span><span>In</span></div>
          <div class="or"><b></b><svg class="si"><use href="#sou"/></svg><span>OUT_INV</span><span>0</span><span>Signal</span><span>Out</span></div>
          <div class="or"><b></b><svg class="si"><use href="#sou"/></svg><span>OUT_WE</span><span>0</span><span>Signal</span><span>Out</span></div>
          <div class="or"><b></b><svg class="si"><use href="#sou"/></svg><span>READY</span><span>1</span><span>Signal</span><span>Out</span></div>
          <div class="or"><b></b><svg class="si"><use href="#sou"/></svg><span>DONE</span><span>1</span><span>Signal</span><span>Out</span></div>
          <div class="or"><b class="x"></b><svg class="si"><use href="#dia"/></svg><span>pc_reg</span><span>13'h0055</span><span>Signal</span><span>Internal</span></div>
          <div class="or"><b></b><svg class="si"><use href="#dia"/></svg><span>pc_inc</span><span>0</span><span>Signal</span><span>Internal</span></div>
          <div class="or"><b></b><svg class="si"><use href="#dia"/></svg><span>pc_dec</span><span>0</span><span>Signal</span><span>Internal</span></div>
          <div class="or"><b class="x"></b><svg class="si"><use href="#dia"/></svg><span>ptr_reg</span><span>13'h0059</span><span>Signal</span><span>Internal</span></div>
          <div class="or"><b></b><svg class="si"><use href="#dia"/></svg><span>ptr_inc</span><span>0</span><span>Signal</span><span>Internal</span></div>
          <div class="or"><b></b><svg class="si"><use href="#dia"/></svg><span>ptr_dec</span><span>0</span><span>Signal</span><span>Internal</span></div>
          <div class="or"><b class="x"></b><svg class="si"><use href="#dia"/></svg><span>tmp_reg</span><span>8'h00</span><span>Signal</span><span>Internal</span></div>
          <div class="or"><b></b><svg class="si"><use href="#dia"/></svg><span>tmp_ld</span><span>0</span><span>Signal</span><span>Internal</span></div>
          <div class="or"><b class="x"></b><svg class="si"><use href="#dia"/></svg><span>cnt_reg</span><span>8'h00</span><span>Signal</span><span>Internal</span></div>
          <div class="or"><b></b><svg class="si"><use href="#dia"/></svg><span>cnt_inc</span><span>0</span><span>Signal</span><span>Internal</span></div>
          <div class="or"><b></b><svg class="si"><use href="#dia"/></svg><span>cnt_dec</span><span>0</span><span>Signal</span><span>Internal</span></div>
          <div class="or"><b></b><svg class="si"><use href="#dia"/></svg><span>mx1_sel</span><span>0</span><span>Signal</span><span>Internal</span></div>
          <div class="or"><b class="x"></b><svg class="si"><use href="#dia"/></svg><span>mx2_sel</span><span>2'h0</span><span>Signal</span><span>Internal</span></div>
          <div class="or"><b></b><svg class="si"><use href="#dia"/></svg><span>fsm_state</span><span>FSM_...</span><span>Signal</span><span>Internal</span></div>
          <div class="or"><b></b><svg class="si"><use href="#dia"/></svg><span>next_state</span><span>FSM_...</span><span>Signal</span><span>Internal</span></div>
        </div>
      </section>
      <section class="procs">
        <div class="ptitle"><svg class="pi"><use href="#gear"/></svg><span class="pt pt-pro">Processes (Active)</span><span class="gl"></span><span class="gd"></span><span class="gl"></span><span class="pb">+</span><span class="pb">&#8599;</span><span class="pb">X</span></div>
        <div class="prhead"><span class="fl"></span><span class="ph1">Name</span><span class="ph2">Type (filtered)</span><span class="ph3">State</span></div>
        <div class="prbody"></div>
        <div class="hs prs"><span class="ar-l"></span><span class="thumb prt"></span><span class="hsf"></span><span class="ar-r"></span></div>
      </section>
    </div>

    <section class="wave">
      <div class="wtitle"><svg class="pi"><use href="#wavi"/></svg><span class="pt pt-wav">Wave - Default</span><span class="wgl"></span><span class="pb">+</span><span class="pb">&#8599;</span><span class="pb">X</span></div>
      <div class="wbody">
        <div class="wn">
          <div class="wnhead"><span class="layb"><svg class="layi"><use href="#lay"/></svg><i class="ct"></i></span></div>
          <div class="wlist">
            <div class="wr sel"><b></b><svg class="si"><use href="#sin"/></svg><span>/cpu/CLK</span></div>
            <div class="wr"><b></b><svg class="si"><use href="#sin"/></svg><span>/cpu/RESET</span></div>
            <div class="wr"><b></b><svg class="si"><use href="#sin"/></svg><span>/cpu/EN</span></div>
            <div class="wr"><b class="x"></b><svg class="si"><use href="#sou"/></svg><span>/cpu/DATA_ADDR</span></div>
            <div class="wr"><b class="x"></b><svg class="si"><use href="#sou"/></svg><span>/cpu/DATA_WDATA</span></div>
            <div class="wr"><b class="x"></b><svg class="si"><use href="#sin"/></svg><span>/cpu/DATA_RDATA</span></div>
            <div class="wr"><b></b><svg class="si"><use href="#sou"/></svg><span>/cpu/DATA_RDWR</span></div>
            <div class="wr"><b></b><svg class="si"><use href="#sou"/></svg><span>/cpu/DATA_EN</span></div>
            <div class="wr"><b class="x"></b><svg class="si"><use href="#sin"/></svg><span>/cpu/IN_DATA</span></div>
            <div class="wr"><b></b><svg class="si"><use href="#sin"/></svg><span>/cpu/IN_VLD</span></div>
            <div class="wr"><b></b><svg class="si"><use href="#sou"/></svg><span>/cpu/IN_REQ</span></div>
            <div class="wr"><b class="x"></b><svg class="si"><use href="#sou"/></svg><span>/cpu/OUT_DATA</span></div>
            <div class="wr"><b></b><svg class="si"><use href="#sin"/></svg><span>/cpu/OUT_BUSY</span></div>
            <div class="wr"><b></b><svg class="si"><use href="#sou"/></svg><span>/cpu/OUT_INV</span></div>
            <div class="wr"><b></b><svg class="si"><use href="#sou"/></svg><span>/cpu/OUT_WE</span></div>
            <div class="wr"><b></b><svg class="si"><use href="#sou"/></svg><span>/cpu/READY</span></div>
            <div class="wr"><b></b><svg class="si"><use href="#sou"/></svg><span>/cpu/DONE</span></div>
            <div class="wr"><b class="x"></b><svg class="si"><use href="#dia"/></svg><span>/cpu/pc_reg</span></div>
            <div class="wr"><b></b><svg class="si"><use href="#dia"/></svg><span>/cpu/pc_inc</span></div>
            <div class="wr"><b></b><svg class="si"><use href="#dia"/></svg><span>/cpu/pc_dec</span></div>
            <div class="wr"><b class="x"></b><svg class="si"><use href="#dia"/></svg><span>/cpu/ptr_reg</span></div>
            <div class="wr"><b></b><svg class="si"><use href="#dia"/></svg><span>/cpu/ptr_inc</span></div>
            <div class="wr"><b></b><svg class="si"><use href="#dia"/></svg><span>/cpu/ptr_dec</span></div>
            <div class="wr"><b class="x"></b><svg class="si"><use href="#dia"/></svg><span>/cpu/tmp_reg</span></div>
            <div class="wr"><b></b><svg class="si"><use href="#dia"/></svg><span>/cpu/tmp_ld</span></div>
            <div class="wr"><b class="x"></b><svg class="si"><use href="#dia"/></svg><span>/cpu/cnt_reg</span></div>
            <div class="wr"><b></b><svg class="si"><use href="#dia"/></svg><span>/cpu/cnt_inc</span></div>
            <div class="wr"><b></b><svg class="si"><use href="#dia"/></svg><span>/cpu/cnt_dec</span></div>
            <div class="wr"><b></b><svg class="si"><use href="#dia"/></svg><span>/cpu/mx1_sel</span></div>
            <div class="wr"><b class="x"></b><svg class="si"><use href="#dia"/></svg><span>/cpu/mx2_sel</span></div>
            <div class="wr"><b></b><svg class="si"><use href="#dia"/></svg><span>/cpu/fsm_state</span></div>
            <div class="wr"><b></b><svg class="si"><use href="#dia"/></svg><span>/cpu/next_state</span></div>
            <div class="endl"></div>
          </div>
          <div class="wfoot">
            <div class="frow nowr"><span class="ficons"><svg class="fi"><use href="#tile"/></svg><svg class="fi"><use href="#tile"/></svg><svg class="fi"><use href="#add"/></svg></span><span class="flab"><span class="n r">Now</span></span></div>
            <div class="frow curr"><span class="ficons"><svg class="fi"><use href="#open"/></svg><svg class="fi"><use href="#cut"/></svg><svg class="fi"><use href="#redc"/></svg></span><span class="flab"><span class="n r">Cursor 1</span></span></div>
            <div class="hs ws1"><span class="ar-l"></span><span class="thumb wide"></span><span class="ar-r"></span></div>
          </div>
        </div>
        <div class="wv">
          <div class="wvhead"><span class="n r">Msgs</span></div>
          <div class="wlist vals">
            <div class="sel">1</div><div>0</div><div>1</div><div>13'h0059</div><div>8'h00</div><div>8'h40</div><div>1</div><div>0</div><div>8'h00</div><div>0</div><div>0</div><div>@</div><div>1</div><div>0</div><div>0</div><div>1</div><div>1</div><div>13'h0055</div><div>0</div><div>0</div><div>13'h0059</div><div>0</div><div>0</div><div>8'h00</div><div>0</div><div>8'h00</div><div>0</div><div>0</div><div>0</div><div>2'h0</div><div>FSM_HALT</div><div>FSM_HALT</div>
            <div class="endl"></div>
          </div>
          <div class="wfoot">
            <div class="frow nowr vr"><span class="n r">32701 ns</span></div>
            <div class="frow curr vr"><span class="n r">0 ns</span></div>
            <div class="hs ws2"><span class="ar-l"></span><span class="thumb wide"></span><span class="ar-r"></span></div>
          </div>
        </div>
        <div class="wa">
          <svg id="wavesvg" class="wsvg" viewBox="1732 223 2202 1911" xmlns="http://www.w3.org/2000/svg"></svg>
          <div class="hs ws3"><span class="ar-l"></span><i class="mark"></i><span class="hsf"></span><span class="thumb wt"></span><span class="ar-r"></span></div>
        </div>
        <div class="wsb">
          <div class="sbcap"></div>
          <div class="sbtrack"><span class="ar-u"></span><span class="ar-d"></span></div>
          <div class="sbgray"></div>
          <div class="sbcap2"></div>
        </div>
      </div>
    </section>
  </main>

  <footer class="status">
    <span class="st st1"><span class="n">Now: 32,701 ns &nbsp; Delta: 0</span></span>
    <span class="st st2"><span class="n">sim:/cpu</span></span>
    <span class="st st3"><span class="n">32115 ns to 32697 ns</span></span>
    <svg class="rgrip" viewBox="0 0 10 10"><path d="M0 10L10 0M4 10l6-6M8 10l2-2" stroke="#888"/></svg>
  </footer>
</div>

<svg class="marks" viewBox="0 0 4068 2311" xmlns="http://www.w3.org/2000/svg">
  <path d="M1827.500 101L1828 290L1829 420L1829.500 500L1830 560L1831 660L1832 790L1833 848" fill="none" stroke="#e00000" stroke-width="1.500"/>
  <path d="M3789.500 198L3790 440L3792 778" fill="none" stroke="#e00000" stroke-width="1.500"/>
  <path d="M3866 214L3880 214C3905 225 3925 320 3929 390C3935 470 3932 560 3925 620C3915 720 3885 775 3865 778C3835 770 3820 600 3816 490C3815 430 3818 390 3820 370C3826 300 3840 225 3866 214" fill="none" stroke="#e00000" stroke-width="1.500"/>
</svg>

<aside class="note">Ospravedlňujem sa za veľkosť/<br>kvalitu obrázku. Mám 4k monitor<br>a questa bola neuveriteľne malá a<br>nevedel som ju žiaľ donútiť k<br>zväčšeniu :(</aside>

<script src="wave.js"></script>
</body>
</html>
```
FILE: styles.css
```css
html, body { margin: 0; padding: 0; background: #fff; }
body { width: 4068px; height: 2311px; overflow: hidden; position: relative; font: 12px/1 "Liberation Sans", sans-serif; color: #1a1a2a; }
.sprite { position: absolute; width: 0; height: 0; }
.window { width: 3839px; padding: 93px 0 0 114px; }

/* the reference's UI text is a tall, condensed face: squeeze real text horizontally */
.n, .or > span, .wr > span, .sr > span:not(.tc) { display: inline-block; transform: translateY(-1px) scaleX(.82); transform-origin: 0 50%; white-space: nowrap; }
.sr > span:not(.tc), .sr .n { transform: translateY(-1px) scaleX(.79); }
.n.r { transform-origin: 100% 50%; }

.titlebar { height: 49px; background: #dfe1e3; display: grid; grid-template-columns: 1fr auto 1fr; align-items: center; }
.logo { width: 35px; height: 35px; margin-left: 7px; }
.wintitle { font: 22.700px "Noto Sans", sans-serif; color: #2b2e31; }
.winctl { display: flex; justify-content: flex-end; gap: 22px; padding-right: 14px; }
.winctl svg { width: 20px; height: 20px; }
.winctl path { fill: none; stroke: #33363a; stroke-width: 1.800; }

.menubar { height: 25px; box-sizing: border-box; width: calc(1000px / .82); display: flex; align-items: center; gap: 13.400px; padding: 0 0 3px 7.300px; transform: scaleX(.82); transform-origin: 0 50%; }
.menubar .on { font-weight: bold; }

.toolbar { height: 33px; box-sizing: border-box; border-top: 2px solid #a6a6a6; border-bottom: 2px solid #b4b4b4; display: flex; gap: 3px; }
.tg { height: 29px; box-sizing: border-box; border-right: 2px solid #a8a8a8; display: flex; align-items: center; flex: none; position: relative; }
.tg::before { content: ""; position: absolute; left: 5px; top: 3px; bottom: 3px; width: 2px; border-left: 1px solid #aaa; border-right: 1px solid #ddd; }
.g1 { width: 373px; padding-left: 13px; box-sizing: border-box; }
.g2 { width: 139px; padding-left: 15px; box-sizing: border-box; }
.g3 { width: 137px; padding-left: 9px; box-sizing: border-box; }
.g4 { width: 482px; padding-left: 7px; box-sizing: border-box; }
.g5 { width: 190px; padding-left: 10px; box-sizing: border-box; }
.g6 { width: 187px; padding-left: 15px; box-sizing: border-box; }
.g7 { width: 290px; padding-left: 12px; box-sizing: border-box; }
.g8 { width: 161px; padding-left: 11px; box-sizing: border-box; }
.g9 { width: 159px; padding-left: 10px; box-sizing: border-box; }
.g10 { width: 172px; padding-left: 10px; box-sizing: border-box; }
.g11 { width: 206px; padding-left: 9px; box-sizing: border-box; }
.g12 { width: 368px; padding-left: 2px; box-sizing: border-box; }
.g13 { width: 155px; padding-left: 1px; box-sizing: border-box; }
.g14 { width: 192px; padding-left: 4px; box-sizing: border-box; }
.ic { width: 24px; height: 28px; flex: none; }
.ml2 { margin-left: 2px; }
.ct { width: 8px; height: 8px; flex: none; position: relative; }
.ct::after { content: ""; position: absolute; left: 1px; top: 3px; border-left: 3px solid transparent; border-right: 3px solid transparent; border-top: 3px solid #222; }
.w10 { width: 10px; }
.w12 { width: 12px; }
.sp { width: 13px; height: 24px; flex: none; background: repeating-linear-gradient(#222 0 1px, transparent 1px 3px) 6px 0 / 1px 100% no-repeat; }
.tl { flex: none; white-space: nowrap; transform: scaleX(.82); transform-origin: 0 50%; }
.tl.dim { color: #a8a8a8; width: 60px; margin-right: 5px; }
.g2 .tl { width: 20px; margin-right: 5px; }
.g6 .tl { width: 28px; margin-right: 5px; }
.srch { margin-left: 22px; width: 34px; margin-right: 5px; }
.inp { flex: none; box-sizing: border-box; height: 18px; border: 1px solid #ddd; background: #fff; font: 11px "Liberation Mono", monospace; display: flex; align-items: center; }
.help-in { width: 64px; }
.g2 .ic { margin-left: 5px; }
.run-in { width: 52px; margin-left: 5px; padding-left: 6px; font-size: 10px; }
.srch-in { width: 119px; justify-content: flex-end; margin-right: 1px; }
.spin { width: 14px; height: 22px; margin: 0 4px 0 1px; display: flex; flex-direction: column; gap: 2px; flex: none; }
.spin i { height: 10px; background: #eee; position: relative; }
.spin i:first-child::after { content: ""; position: absolute; left: 3px; top: 2px; border: 4px solid transparent; border-top: 0; border-bottom: 6px solid #111; }
.spin i:last-child::after { content: ""; position: absolute; left: 3px; top: 2px; border: 4px solid transparent; border-bottom: 0; border-top: 6px solid #111; }
.combo { flex: none; box-sizing: border-box; height: 17px; background: #d4d4d4; font: 11.500px "Liberation Mono", monospace; color: #333; padding-left: 2px; line-height: 17px; }
.lay-c { width: 106px; }
.col-c { width: 183px; }
.dimc { color: #888; }
.cbtn { flex: none; width: 18px; height: 19px; margin-left: 2px; border: 1px solid #ccc; box-sizing: border-box; position: relative; }
.cbtn i { position: absolute; left: 2px; top: 5px; border-left: 6px solid transparent; border-right: 6px solid transparent; border-top: 8px solid #000; }
.cbtn.thin { margin-left: 4px; }
.cbtn.thin i { left: 3px; border-left-width: 5px; border-right-width: 5px; border-top: 6px solid #555; }

.main { height: 1951px; margin-top: 2px; background: #d9d9d9; display: flex; }
.sim { width: 1040px; box-sizing: border-box; background: #fff; display: flex; flex-direction: column; flex: none; }
.midcol { width: 292px; margin-left: 9px; display: flex; flex-direction: column; gap: 8px; flex: none; }
.wave { width: 2489px; margin-left: 9px; background: #fff; display: flex; flex-direction: column; flex: none; }

.ptitle { height: 20px; display: flex; align-items: center; background: #fff; padding-right: 2px; flex: none; border-bottom: 1px solid #c0c0c0; box-sizing: border-box; }
.pi { width: 20px; height: 20px; flex: none; margin: 0 2px; }
.pt { flex: none; display: block; white-space: nowrap; transform: scaleX(.82); transform-origin: 0 50%; }
.pt-sim { width: 58px; }
.pt-obj { width: 37px; }
.pt-pro { width: 85px; }
.pt-wav { width: 68px; }
.gl { flex: 1; height: 5px; border-top: 1px solid #b8b8b8; border-bottom: 1px solid #b8b8b8; margin-top: 1px; }
.gd { width: 18px; height: 6px; flex: none; background: repeating-linear-gradient(90deg, #444 0 1px, transparent 1px 3px) 0 0 / 100% 1px no-repeat, repeating-linear-gradient(90deg, #444 0 1px, transparent 1px 3px) 0 3px / 100% 1px no-repeat, repeating-linear-gradient(90deg, #444 0 1px, transparent 1px 3px) 0 5px / 100% 1px no-repeat; }
.pb { width: 14px; height: 14px; margin-left: 4px; flex: none; background: #fff; border: 1px solid #ddd; box-sizing: border-box; font: bold 12px/12px "Liberation Sans", sans-serif; color: #000; text-align: center; }

.simhead, .objhead, .prhead { flex: none; display: flex; align-items: center; border-bottom: 2px solid #ababab; box-sizing: border-box; background: #fff; transform: scaleX(.82); transform-origin: 0 50%; }
.simhead { height: 15px; width: calc(506px / .82); }
.objhead { height: 15px; width: calc(292px / .82); }
.prhead { height: 16px; width: calc(292px / .82); }
.fl { width: 14.600px; height: 13px; margin: 0 2.400px; flex: none; position: relative; border: 1px solid #ddd; box-sizing: border-box; }
.simhead .fl { margin-right: 5px; }
.fl::after { content: ""; position: absolute; left: 2px; top: 3px; border-left: 4px solid transparent; border-right: 4px solid transparent; border-top: 6px solid #444; }
.simhead span:not(.fl), .objhead span:not(.fl):not(.nowbox), .prhead span:not(.fl) { height: 13px; line-height: 13px; box-sizing: border-box; border-right: 1px solid #aaa; flex: none; padding-left: 1px; white-space: nowrap; }
.h1 { width: calc(118px / .82); }
.h2 { width: calc(64px / .82); }
.h3 { width: calc(87px / .82); }
.h4 { width: calc(86px / .82); }
.h5 { width: calc(53px / .82); }
.h6 { width: calc(80px / .82); }
.simbody { flex: 1; border-left: 2px solid #bcbcbc; border-right: 2px solid #bcbcbc; border-bottom: 2px solid #bcbcbc; padding-top: 4px; position: relative; }
.sr { width: 504px; height: 15px; display: grid; grid-template-columns: 136px 64px 87px 86px 52px; align-items: center; }
.sr.pk { height: 16px; }
.sr.sel { background: #e0e0e0; }
.tc { display: flex; align-items: center; position: relative; white-space: nowrap; }
.mi { width: 14px; height: 14px; flex: none; margin-right: 5px; }
.top { padding-left: 23px; }
.sr .top .x { position: absolute; left: 7px; top: 2px; }
.pr { padding-left: 40px; }
.pr::before { content: ""; position: absolute; left: 28px; top: -8px; bottom: 7px; border-left: 1px dotted #555; }
.pr::after { content: ""; position: absolute; left: 29px; top: 7px; width: 10px; border-top: 1px dotted #555; }
.x { display: block; width: 10px; height: 10px; box-sizing: border-box; background: #fff; border: 1px solid #d8d8d8; position: relative; }
.x::before, .x::after { content: ""; position: absolute; background: #000; }
.x::before { left: 1px; top: 3px; width: 6px; height: 2px; }
.x::after { left: 3px; top: 1px; width: 2px; height: 6px; }
.minus::after { display: none; }
.tabs { height: 24px; flex: none; display: flex; align-items: flex-start; padding-top: 1px; box-sizing: border-box; border-top: 2px solid #000; margin-top: 1px; }
.tab { height: 19px; display: flex; align-items: center; box-sizing: border-box; border: 1px solid #222; border-top: 0; border-bottom-width: 2px; border-radius: 0 0 3px 3px; flex: none; }
.tab em { font-style: normal; font-weight: bold; color: #bbb; margin-left: 5px; }
.tab.off { width: 71px; margin-left: 1px; background: #d6d6d6; color: #556; }
.tab.act { width: 59px; background: #fff; }
.tn1 { width: 30px; }
.tn2 { width: 17px; }
.tabfill { flex: 1; }
.tabs .pi { width: 16px; height: 18px; margin: 0 2px 0 1px; }

.objs { height: 966px; background: #fff; display: flex; flex-direction: column; flex: none; }
.procs { flex: 1; background: #fff; display: flex; flex-direction: column; }
.oh1 { width: calc(118px / .82); }
.oh2 { width: calc(42px / .82); }
.oh3 { width: calc(22px / .82); }
.nowbox { flex: none; width: calc(77px / .82); height: 13px; display: flex; align-items: center; background: #eee; border: 1px solid #bbb; box-sizing: border-box; }
.nowbox i { font-style: normal; }
.nb { font-size: 11px; color: #222; width: 18px; text-align: center; flex: none; }
.sq { width: 10px; height: 10px; background: #f08010; border: 1px solid #a05000; box-sizing: border-box; margin: 0 3px 0 4px; flex: none; }
.nw { color: #aaa; width: 22px; flex: none; }
.more { width: 0; height: 0; margin-left: 8px; border-top: 5px solid transparent; border-bottom: 5px solid transparent; border-left: 6px solid #000; flex: none; }
.objlist { flex: 1; margin: 0 1px 0 2px; background: #505a8c; padding-top: 4px; color: #eaeaf2; }
.or { width: 253px; height: 15px; display: grid; grid-template-columns: 16px 24px 95px 42px 38px 38px; align-items: center; white-space: nowrap; }
.or .x { margin-left: 6px; }
.or.sel { background: #e0e0e0; color: #1a1a3a; }
.si { width: 24px; height: 18px; }
.ph1 { width: calc(119px / .82); }
.ph2 { width: calc(101px / .82); }
.ph3 { width: calc(54px / .82); }
.prbody { flex: 1; background: #8aa5ff; margin: 0 1px 3px 2px; }
.hs { height: 12px; background: #bbb; display: flex; align-items: stretch; flex: none; }
.prs { height: 13px; margin: 0 1px 1px 2px; }
.thumb { background: #fff; flex: none; display: block; }
.prt { width: 133px; }
.hsf { flex: 1; }
.ar-l, .ar-r { flex: none; width: 11px; position: relative; display: block; }
.ar-l::after { content: ""; position: absolute; left: 1px; top: 1px; border: 5px solid transparent; border-left: 0; border-right: 8px solid #eee; }
.ar-r::after { content: ""; position: absolute; right: 1px; top: 1px; border: 5px solid transparent; border-right: 0; border-left: 8px solid #eee; }

.wtitle { height: 19px; background: #5f70b4; color: #e8ecf8; display: flex; align-items: center; flex: none; padding-right: 4px; margin-bottom: 1px; }
.wgl { flex: 1; height: 5px; margin: 0 3px 0 0; border-top: 1px solid #b0bce8; border-bottom: 1px solid #b0bce8; }
.wbody { flex: 1; display: flex; padding: 1px 0 4px 3px; min-height: 0; }
.wn { width: 158px; flex: none; margin-right: 3px; display: flex; flex-direction: column; }
.wnhead { height: 18px; margin-left: 8px; background: #808080; flex: none; }
.layb { display: flex; align-items: center; width: 31px; height: 17px; background: #fff; box-sizing: border-box; border: 1px solid #ccc; }
.layi { width: 20px; height: 16px; flex: none; }
.wlist { flex: 1; margin-left: 8px; background: #808080; border-top: 5px solid #fff; color: #ececec; min-height: 0; }
.wr { height: 16px; display: grid; grid-template-columns: 15px 24px 1fr; align-items: center; white-space: nowrap; }
.wr .x { margin-left: 5px; }
.wr.sel { background: #fff; color: #1a1a3a; }
.endl { height: 1px; background: #000; margin: 0 3px; }
.wfoot { flex: none; border-top: 3px solid #fff; }
.frow { background: #808080; display: flex; color: #e6e6e6; }
.nowr { height: 21px; }
.curr { height: 16px; }
.ficons { width: 49px; flex: none; display: flex; align-items: center; padding-left: 5px; box-sizing: border-box; }
.fi { width: 14px; height: 16px; flex: none; }
.flab { flex: 1; text-align: right; padding-right: 7px; line-height: 21px; }
.curr .flab { line-height: 16px; }
.nowr .flab { background: #fff; color: #1a1a3a; }
.wv { width: 100px; flex: none; margin-right: 4px; display: flex; flex-direction: column; }
.wvhead { background: #808080; border: 1px solid #fff; flex: none; text-align: right; color: #e0e0e0; padding: 2px 3px 0 0; box-sizing: border-box; height: 18px; line-height: 14px; }
.vals { margin-left: 0; }
.vals div:not(.endl) { height: 16px; line-height: 16px; white-space: nowrap; width: calc(100% / .82); box-sizing: border-box; padding-left: 2.500px; transform: scaleX(.82); transform-origin: 0 50%; }
.vals .sel { background: #fff; color: #111; }
.vr { justify-content: flex-end; padding-right: 7px; align-items: center; }
.vr.nowr { background: #fff; color: #1a1a3a; }
.ws1, .ws2 { margin-top: 3px; background: #808080; }
.ws1 { padding-left: 8px; }
.ws2 { background: #d9d9d9; }
.wide { flex: 1; }
.wa { width: 2202px; flex: none; margin-right: 3px; display: flex; flex-direction: column; }
.wsvg { display: block; width: 2202px; height: 1911px; flex: none; shape-rendering: crispEdges; background: #000; }
.ws3 { margin-top: 3px; }
.mark { width: 1px; background: #e8b800; flex: none; }
.wt { width: 38px; margin-right: 3px; }
.wsb { width: 13px; flex: none; display: flex; flex-direction: column; }
.sbcap { height: 18px; background: #808080; flex: none; margin-bottom: 3px; }
.sbtrack { height: 1850px; background: #fff; flex: none; display: flex; flex-direction: column; justify-content: space-between; align-items: center; border: 1px solid #ccc; box-sizing: border-box; }
.ar-u { border: 5px solid transparent; border-top: 0; border-bottom: 11px solid #ccc; margin-top: 2px; }
.ar-d { border: 5px solid transparent; border-bottom: 0; border-top: 11px solid #ccc; margin-bottom: 2px; }
.sbgray { height: 37px; background: #808080; margin-top: 3px; flex: none; }
.sbcap2 { height: 13px; background: #808080; margin-top: 3px; flex: none; }

.status { height: 17px; margin-top: 3px; display: flex; align-items: stretch; position: relative; }
.st { flex: none; box-sizing: border-box; border-top: 1px solid #9a9a9a; border-left: 1px solid #9a9a9a; border-bottom: 1px solid #e2e2e2; line-height: 15px; padding-left: 2px; white-space: nowrap; }
.st1 { width: 182px; margin-left: 3px; }
.st2 { width: 3481px; margin-left: 5px; }
.st3 { width: 143px; margin-left: 5px; padding-left: 6px; }
.rgrip { width: 10px; height: 10px; margin: 7px 0 0 9px; flex: none; }

.marks { position: absolute; left: 0; top: 0; width: 4068px; height: 2311px; pointer-events: none; }
.note { position: absolute; left: 1761px; top: 988px; width: 970px; height: 400px; padding-left: 2px; box-sizing: border-box; background: #fff; color: #000; font: 64px/80px "Liberation Sans", sans-serif; white-space: nowrap; }

.wt-t { font: 12px "Liberation Sans", sans-serif; fill: #e8eef8; }
.wt-g { font: 12px "Liberation Sans", sans-serif; fill: #2ecc00; text-anchor: middle; }
```
FILE: wave.js
```js
// Draws the waveform pane: one time axis, one list of signal changes per row.
(function () {
  var svg = document.getElementById('wavesvg');
  var T0 = 32150, X0 = 1866, PX = 3.776, TMIN = 32115, TMAX = 32697;
  var LEFT = 1734, RIGHT = 3931;
  var GREEN = '#40e040', BUS = '#b4f4b4', CLK = '#ffa500', GRID = '#808080';
  var X = function (t) { return Math.round(X0 + (t - T0) * PX); };
  var top = function (i) { return 246 + 16 * i; };
  var out = [];

  function line(x1, y1, x2, y2, c) {
    out.push('<path d="M' + (x1 + .5) + ' ' + (y1 + .5) + 'L' + (x2 + .5) + ' ' + (y2 + .5) + '" stroke="' + c + '" fill="none"/>');
  }
  function text(x, y, s, cls) {
    out.push('<text transform="translate(' + x + ' ' + y + ') scale(.82 1)" class="' + cls + '">' + s + '</text>');
  }

  // grid
  for (var g = 32120; g <= TMAX; g += 20) line(X(g), 244, X(g), 2094, GRID);
  // separators
  out.push('<rect x="1732" y="241" width="2202" height="3" fill="#e8e8e8"/>');
  out.push('<rect x="1732" y="2094" width="2202" height="3" fill="#e8e8e8"/>');

  // clock
  var d = 'M' + LEFT + ' 259.5', lvl = 0;
  for (var c = 32120; c < TMAX; c += 5) {
    var x = X(c) + .5;
    lvl = 1 - lvl;
    d += 'H' + x + 'V' + (lvl ? 249.5 : 259.5);
  }
  d += 'H' + RIGHT;
  out.push('<path d="' + d + '" stroke="' + CLK + '" fill="none"/>');

  // single-bit rows: [row, initial level, [change times]]
  var bits = [
    [1, 0, []], [2, 1, []], [6, 1, []], [7, 1, [32690]], [9, 0, []], [10, 0, []],
    [12, 1, [32130, 32150, 32650, 32670]], [13, 0, []], [14, 0, [32140, 32150, 32660, 32670]],
    [15, 1, []], [16, 0, []], [18, 0, [32140, 32150, 32660, 32670]], [19, 0, []], [21, 0, []],
    [22, 0, []], [24, 0, []], [26, 0, []], [27, 0, []], [28, 0, [32150, 32170, 32670, 32690]]
  ];
  bits.forEach(function (b) {
    var t = top(b[0]), v = b[1];
    var yv = function (l) { return (l ? t + 3 : t + 13) + .5; };
    var p = 'M' + LEFT + ' ' + yv(v);
    b[2].forEach(function (e) {
      var xx = X(e) + .5;
      v = 1 - v;
      p += 'H' + xx + 'V' + yv(v);
    });
    p += 'H' + RIGHT;
    out.push('<path d="' + p + '" stroke="' + GREEN + '" fill="none"/>');
  });

  // bus rows: [row, [[time, label], ...]]
  var H = 'FS...';
  var buses = [
    [3, [[TMIN, '0059'], [32150, '0054'], [32170, '0059'], [32670, '0055'], [32690, '0...']]],
    [4, [[TMIN, '00']]],
    [5, [[TMIN, '30'], [32160, '2E'], [32180, '30'], [32680, '40']]],
    [8, [[TMIN, '00']]],
    [11, [[TMIN, '.'], [32140, '0'], [32170, '.'], [32660, '0'], [32690, '0']]],
    [17, [[TMIN, '0053'], [32150, '0054'], [32670, '0055']]],
    [20, [[TMIN, '0059']]],
    [23, [[TMIN, '00']]],
    [25, [[TMIN, '00']]],
    [29, [[TMIN, '0']]],
    [30, [[TMIN, 'FSM_PRINT_W...'], [32140, H], [32150, H], [32160, H], [32170, H], [32180, 'FSM_PRINT_WAIT'], [32660, H], [32670, H], [32680, H], [32690, 'FS...']]],
    [31, [[TMIN, 'FSM_P...'], [32130, H], [32140, H], [32150, H], [32160, H], [32170, 'FSM_PRINT_WAIT'], [32650, H], [32660, H], [32670, H], [32680, 'FSM_HALT']]]
  ];
  buses.forEach(function (b) {
    var t = top(b[0]), hi = t + 2, lo = t + 13, seg = b[1];
    seg.forEach(function (s, i) {
      var a = i ? X(s[0]) : LEFT - 1;
      var e = i + 1 < seg.length ? X(seg[i + 1][0]) : RIGHT;
      line(a + (i ? 2 : 0), hi, e - (i + 1 < seg.length ? 2 : 0), hi, BUS);
      line(a + (i ? 2 : 0), lo, e - (i + 1 < seg.length ? 2 : 0), lo, BUS);
      if (i) {
        line(a, hi + 2, a, lo - 2, BUS);
        line(a - 1, hi + 1, a + 1, hi + 1, BUS);
        line(a - 1, lo - 1, a + 1, lo - 1, BUS);
      }
      text(a + 5, t + 12, s[1], 'wt-t');
    });
  });

  // ruler
  for (var r = TMIN; r <= TMAX; r += 5) {
    var tall = r % 25 === 0;
    line(X(r), tall ? 2097 : 2100, X(r), 2105, '#20e020');
    if (r % 50 === 0) text(X(r), 2116, r + ' ns', 'wt-g');
  }
  line(1734, 2118, RIGHT, 2118, GRID);

  svg.innerHTML = out.join('');
})();
```
